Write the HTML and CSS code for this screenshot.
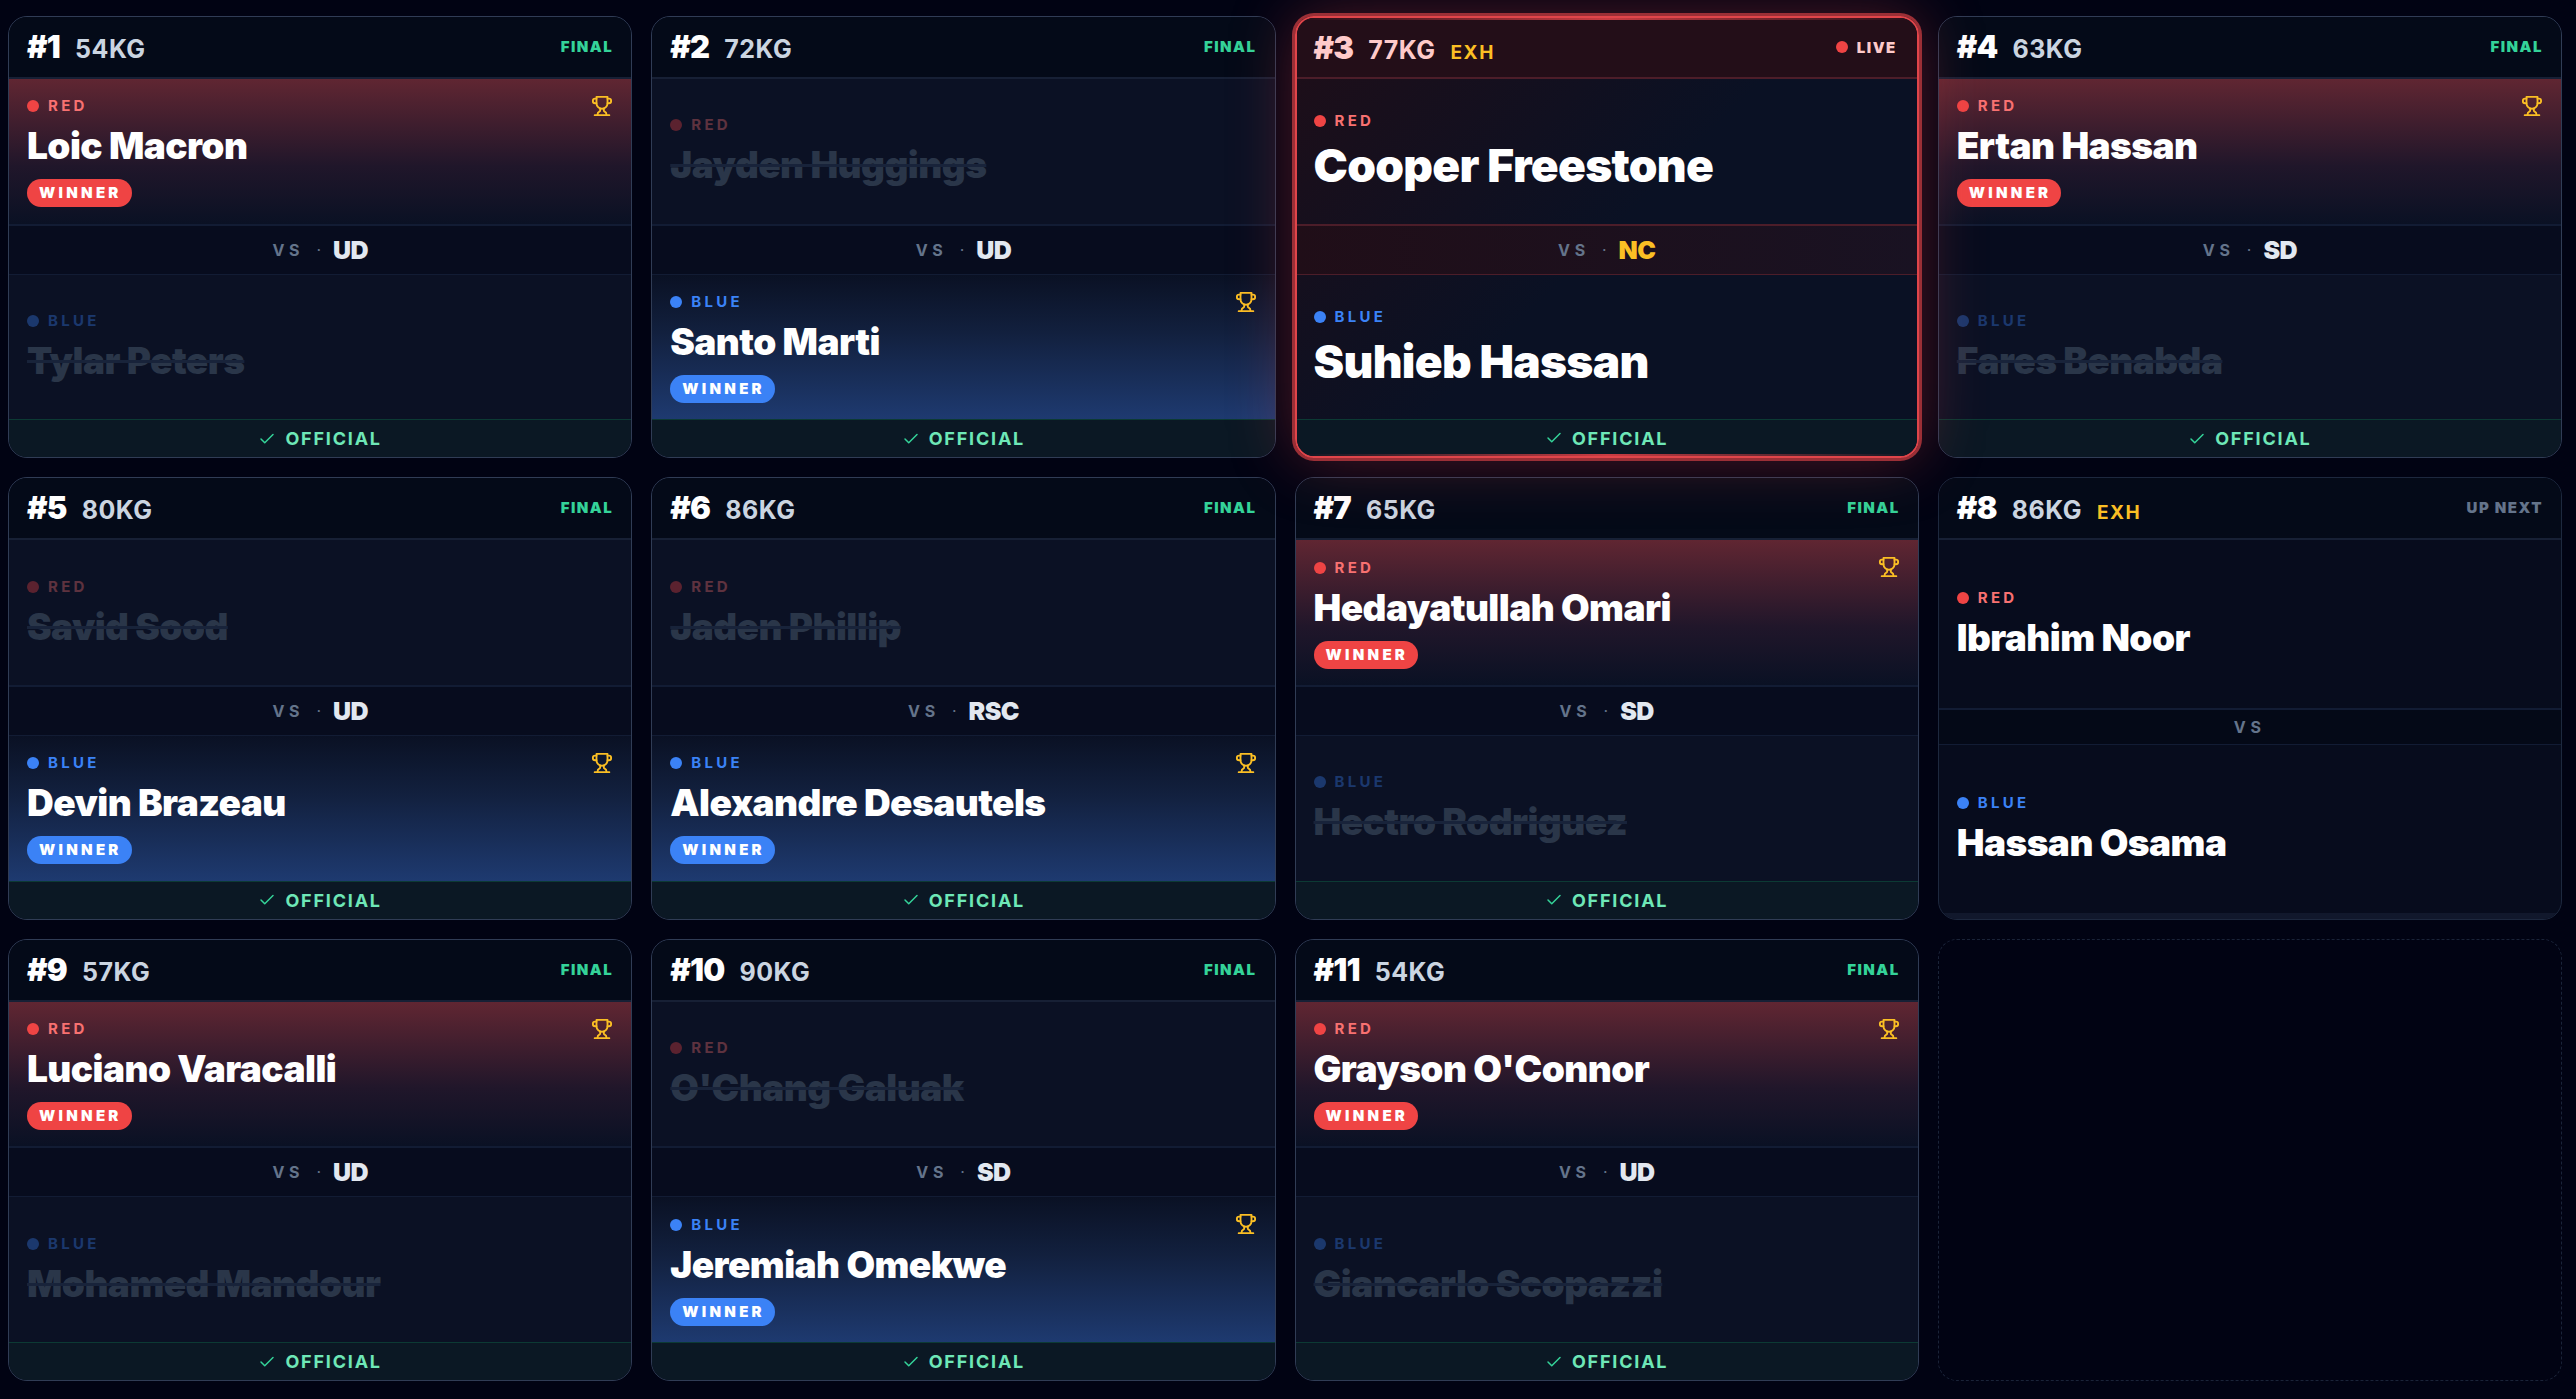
FILE: index.html
```html
<!DOCTYPE html>
<html lang="en">
<head>
<meta charset="utf-8">
<title>Bout Board</title>
<link rel="stylesheet" href="styles.css">
</head>
<body>
<svg class="sprite" aria-hidden="true">
  <symbol id="trophy" viewBox="0 0 24 24">
    <path d="M6 9H4.5a2.5 2.5 0 0 1 0-5H6"/><path d="M18 9h1.500a2.500 2.500 0 0 0 0-5H18"/><path d="M4 22h16"/><path d="M10 14.660V17c0 .55-.47.98-.97 1.210C7.850 18.750 7 20.240 7 22"/><path d="M14 14.660V17c0 .55.47.98.97 1.210C16.150 18.750 17 20.240 17 22"/><path d="M18 2H6v7a6 6 0 0 0 12 0V2Z"/>
  </symbol>
  <symbol id="check" viewBox="0 0 24 24"><path d="M20 6 9 17l-5-5"/></symbol>
</svg>
<main class="board">
  <article class="card">
    <header class="head"><h2 class="num">#1</h2><span class="weight">54KG</span><span class="status">FINAL</span></header>
    <section class="corner red win"><span class="side">RED</span><svg class="trophy"><use href="#trophy"/></svg><h3 class="name">Loic Macron</h3><span class="pill">WINNER</span></section>
    <div class="versus"><span class="vs">VS</span><span class="dot">·</span><span class="result">UD</span></div>
    <section class="corner blue loss"><span class="side">BLUE</span><h3 class="name">Tylar Peters</h3></section>
    <footer class="foot"><svg class="check"><use href="#check"/></svg>OFFICIAL</footer>
  </article>
  <article class="card">
    <header class="head"><h2 class="num">#2</h2><span class="weight">72KG</span><span class="status">FINAL</span></header>
    <section class="corner red loss"><span class="side">RED</span><h3 class="name">Jayden Huggings</h3></section>
    <div class="versus"><span class="vs">VS</span><span class="dot">·</span><span class="result">UD</span></div>
    <section class="corner blue win"><span class="side">BLUE</span><svg class="trophy"><use href="#trophy"/></svg><h3 class="name">Santo Marti</h3><span class="pill">WINNER</span></section>
    <footer class="foot"><svg class="check"><use href="#check"/></svg>OFFICIAL</footer>
  </article>
  <article class="card live">
    <header class="head"><h2 class="num">#3</h2><span class="weight">77KG</span><span class="tag">EXH</span><span class="status">LIVE</span></header>
    <section class="corner red"><span class="side">RED</span><h3 class="name">Cooper Freestone</h3></section>
    <div class="versus"><span class="vs">VS</span><span class="dot">·</span><span class="result nc">NC</span></div>
    <section class="corner blue"><span class="side">BLUE</span><h3 class="name">Suhieb Hassan</h3></section>
    <footer class="foot"><svg class="check"><use href="#check"/></svg>OFFICIAL</footer>
  </article>
  <article class="card">
    <header class="head"><h2 class="num">#4</h2><span class="weight">63KG</span><span class="status">FINAL</span></header>
    <section class="corner red win"><span class="side">RED</span><svg class="trophy"><use href="#trophy"/></svg><h3 class="name">Ertan Hassan</h3><span class="pill">WINNER</span></section>
    <div class="versus"><span class="vs">VS</span><span class="dot">·</span><span class="result">SD</span></div>
    <section class="corner blue loss"><span class="side">BLUE</span><h3 class="name">Fares Benabda</h3></section>
    <footer class="foot"><svg class="check"><use href="#check"/></svg>OFFICIAL</footer>
  </article>
  <article class="card">
    <header class="head"><h2 class="num">#5</h2><span class="weight">80KG</span><span class="status">FINAL</span></header>
    <section class="corner red loss"><span class="side">RED</span><h3 class="name">Savid Sood</h3></section>
    <div class="versus"><span class="vs">VS</span><span class="dot">·</span><span class="result">UD</span></div>
    <section class="corner blue win"><span class="side">BLUE</span><svg class="trophy"><use href="#trophy"/></svg><h3 class="name">Devin Brazeau</h3><span class="pill">WINNER</span></section>
    <footer class="foot"><svg class="check"><use href="#check"/></svg>OFFICIAL</footer>
  </article>
  <article class="card">
    <header class="head"><h2 class="num">#6</h2><span class="weight">86KG</span><span class="status">FINAL</span></header>
    <section class="corner red loss"><span class="side">RED</span><h3 class="name">Jaden Phillip</h3></section>
    <div class="versus"><span class="vs">VS</span><span class="dot">·</span><span class="result">RSC</span></div>
    <section class="corner blue win"><span class="side">BLUE</span><svg class="trophy"><use href="#trophy"/></svg><h3 class="name">Alexandre Desautels</h3><span class="pill">WINNER</span></section>
    <footer class="foot"><svg class="check"><use href="#check"/></svg>OFFICIAL</footer>
  </article>
  <article class="card">
    <header class="head"><h2 class="num">#7</h2><span class="weight">65KG</span><span class="status">FINAL</span></header>
    <section class="corner red win"><span class="side">RED</span><svg class="trophy"><use href="#trophy"/></svg><h3 class="name">Hedayatullah Omari</h3><span class="pill">WINNER</span></section>
    <div class="versus"><span class="vs">VS</span><span class="dot">·</span><span class="result">SD</span></div>
    <section class="corner blue loss"><span class="side">BLUE</span><h3 class="name">Hectro Rodriguez</h3></section>
    <footer class="foot"><svg class="check"><use href="#check"/></svg>OFFICIAL</footer>
  </article>
  <article class="card next">
    <header class="head"><h2 class="num">#8</h2><span class="weight">86KG</span><span class="tag">EXH</span><span class="status">UP NEXT</span></header>
    <section class="corner red"><span class="side">RED</span><h3 class="name">Ibrahim Noor</h3></section>
    <div class="versus"><span class="vs">VS</span></div>
    <section class="corner blue"><span class="side">BLUE</span><h3 class="name">Hassan Osama</h3></section>
    <footer class="strip"></footer>
  </article>
  <article class="card">
    <header class="head"><h2 class="num">#9</h2><span class="weight">57KG</span><span class="status">FINAL</span></header>
    <section class="corner red win"><span class="side">RED</span><svg class="trophy"><use href="#trophy"/></svg><h3 class="name">Luciano Varacalli</h3><span class="pill">WINNER</span></section>
    <div class="versus"><span class="vs">VS</span><span class="dot">·</span><span class="result">UD</span></div>
    <section class="corner blue loss"><span class="side">BLUE</span><h3 class="name">Mohamed Mandour</h3></section>
    <footer class="foot"><svg class="check"><use href="#check"/></svg>OFFICIAL</footer>
  </article>
  <article class="card">
    <header class="head"><h2 class="num">#10</h2><span class="weight">90KG</span><span class="status">FINAL</span></header>
    <section class="corner red loss"><span class="side">RED</span><h3 class="name">O'Chang Galuak</h3></section>
    <div class="versus"><span class="vs">VS</span><span class="dot">·</span><span class="result">SD</span></div>
    <section class="corner blue win"><span class="side">BLUE</span><svg class="trophy"><use href="#trophy"/></svg><h3 class="name">Jeremiah Omekwe</h3><span class="pill">WINNER</span></section>
    <footer class="foot"><svg class="check"><use href="#check"/></svg>OFFICIAL</footer>
  </article>
  <article class="card">
    <header class="head"><h2 class="num">#11</h2><span class="weight">54KG</span><span class="status">FINAL</span></header>
    <section class="corner red win"><span class="side">RED</span><svg class="trophy"><use href="#trophy"/></svg><h3 class="name">Grayson O'Connor</h3><span class="pill">WINNER</span></section>
    <div class="versus"><span class="vs">VS</span><span class="dot">·</span><span class="result">UD</span></div>
    <section class="corner blue loss"><span class="side">BLUE</span><h3 class="name">Giancarlo Scopazzi</h3></section>
    <footer class="foot"><svg class="check"><use href="#check"/></svg>OFFICIAL</footer>
  </article>
  <div class="slot"></div>
</main>
</body>
</html>
```

FILE: styles.css
```css
* { box-sizing: border-box; }

body {
  margin: 0;
  background: #010313;
  color: #fff;
  font-family: Inter, "Liberation Sans", sans-serif;
}

.sprite { display: none; }

.board {
  display: grid;
  grid-template-columns: repeat(4, minmax(0, 1fr));
  grid-template-rows: repeat(3, minmax(0, 1fr));
  gap: 19px;
  min-height: 100vh;
  padding: 16px 14px 18px 8px;
}

.card,
.slot {
  min-height: 440px;
  border-radius: 19px;
}

.card {
  position: relative;
  display: flex;
  flex-direction: column;
  overflow: hidden;
  border: 1px solid #303c55;
  background: #0b1124;
}

.slot { border: 1px dashed #1a2338; }

/* Header row */
.head {
  display: flex;
  align-items: baseline;
  gap: 15px;
  height: 62px;
  padding: 0 18px;
  border-bottom: 2px solid #172035;
  background: #040a18;
  line-height: 60px;
}

.num {
  margin: 0;
  font-size: 31px;
  font-weight: 900;
  letter-spacing: -0.025em;
}

.weight {
  color: #cbd5e1;
  font-size: 25px;
  font-weight: 700;
  letter-spacing: 0.02em;
}

.tag {
  color: #fbbf24;
  font-size: 19px;
  font-weight: 700;
  letter-spacing: 0.08em;
}

.status {
  align-self: center;
  margin-left: auto;
  color: #34d399;
  font-size: 15px;
  font-weight: 900;
  letter-spacing: 0.1em;
}

/* Corners */
.corner {
  position: relative;
  display: flex;
  flex: 1 1 0;
  flex-direction: column;
  align-items: flex-start;
  justify-content: center;
  padding: 2px 18px 0;
}

.side {
  display: flex;
  align-items: center;
  gap: 9px;
  margin-bottom: 8px;
  font-size: 15px;
  font-weight: 700;
  letter-spacing: 0.22em;
  line-height: 18px;
}

.side::before {
  width: 12px;
  height: 12px;
  border-radius: 50%;
  background: currentColor;
  content: "";
}

.red .side { color: #f87171; }
.blue .side { color: #3b82f6; }
.red .side::before { background: #ef4444; }

.name {
  margin: 0;
  font-size: 37px;
  font-weight: 900;
  letter-spacing: -0.015em;
  line-height: 46px;
}

.pill {
  margin-top: 10px;
  padding: 0 10px 0 12px;
  border-radius: 14px;
  font-size: 15px;
  font-weight: 900;
  letter-spacing: 0.22em;
  line-height: 28px;
}

.red .pill { background: #ef4444; }
.blue .pill { background: #3b82f6; }

.red.win { background: linear-gradient(to bottom, #602632, #20162a 60%, #0a1124); }
.blue.win { background: linear-gradient(to top, #1e3a70, #12203e 60%, #0a1124); }

.loss .side { opacity: 0.35; }
.loss .name { color: #2a3649; text-decoration: line-through; text-decoration-color: #18233a; }

.trophy {
  position: absolute;
  top: 16px;
  right: 18px;
  width: 22px;
  height: 22px;
  fill: none;
  stroke: #fbbf24;
  stroke-linecap: round;
  stroke-linejoin: round;
  stroke-width: 2;
}

/* Divider with the decision */
.versus {
  display: flex;
  align-items: center;
  justify-content: center;
  height: 51px;
  border-top: 2px solid #121c34;
  border-bottom: 1px solid #121c34;
  background: #070c1e;
}

.vs {
  color: #64748b;
  font-size: 16px;
  font-weight: 700;
  letter-spacing: 0.3em;
}

.dot {
  margin: 0 12px;
  color: #64748b;
  font-size: 16px;
}

.result {
  color: #e2e8f0;
  font-size: 25px;
  font-weight: 900;
  letter-spacing: -0.025em;
}

.result.nc { color: #fbbf24; }

.foot {
  display: flex;
  align-items: center;
  justify-content: center;
  gap: 9px;
  height: 38px;
  border-top: 1px solid #0c3a34;
  background: #0b1824;
  color: #6ee7b7;
  font-size: 18px;
  font-weight: 700;
  letter-spacing: 0.1em;
}

.check {
  width: 18px;
  height: 18px;
  fill: none;
  stroke: #34d399;
  stroke-linecap: round;
  stroke-linejoin: round;
  stroke-width: 2;
}

/* Bout in progress */
.live {
  z-index: 1;
  border: 2px solid #e0454a;
  background: linear-gradient(135deg, #1f0e18, #0a1124 50%);
  box-shadow: 0 0 0 3px #9b2f36, 0 0 64px rgba(239, 68, 68, 0.35);
}

.live::before,
.live::after {
  position: absolute;
  left: 0;
  width: 100%;
  height: 2px;
  background: linear-gradient(to right, transparent, #c93c42, transparent);
  content: "";
}

.live::before { top: 0; }
.live::after { bottom: 0; }

.live .head { height: 61px; padding: 0 20px 0 17px; border-color: #4c1d29; background: #230e18; }
.live .num, .live .weight, .live .status { color: #fecaca; }
.live .versus { border-color: #4c1d29; background: linear-gradient(to right, #200e18, #191222); }
.live .corner { padding: 4px 17px 0; }
.live .side { margin-bottom: 6px; }
.live .name { font-size: 46px; line-height: 58px; }
.live .foot { height: 37px; }

.live .status::before {
  display: inline-block;
  width: 12px;
  height: 12px;
  margin-right: 9px;
  border-radius: 50%;
  background: #ef4444;
  content: "";
}

/* Bout coming up */
.next { border-color: #1d283e; background: #070c1d; }
.next .versus { height: 37px; background: #040917; }
.next .status { color: #64748b; }
.strip { height: 6px; background: #11182c; }
```
